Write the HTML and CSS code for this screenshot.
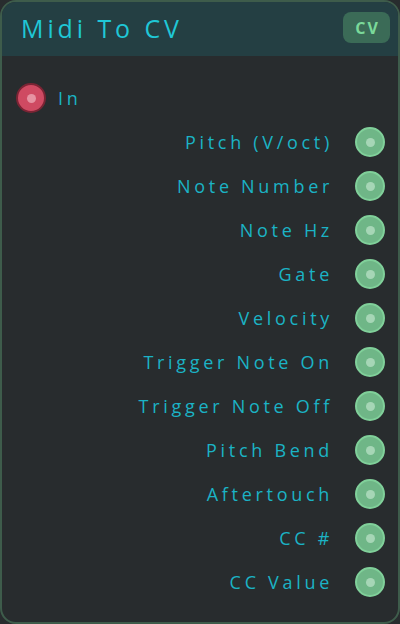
FILE: index.html
```html
<!DOCTYPE html>
<html>
<head>
<meta charset="utf-8">
<link rel="stylesheet" href="styles.css">
</head>
<body>
<div class="card">
  <div class="header">
    <span class="title">Midi To CV</span>
    <span class="badge">CV</span>
  </div>
  <div class="content">
    <div class="row in-row">
      <span class="port in"></span>
      <span class="label">In</span>
    </div>
    <div class="row out-row"><span class="label">Pitch (V/oct)</span><span class="port out"></span></div>
    <div class="row out-row"><span class="label">Note Number</span><span class="port out"></span></div>
    <div class="row out-row"><span class="label">Note Hz</span><span class="port out"></span></div>
    <div class="row out-row"><span class="label">Gate</span><span class="port out"></span></div>
    <div class="row out-row"><span class="label">Velocity</span><span class="port out"></span></div>
    <div class="row out-row"><span class="label">Trigger Note On</span><span class="port out"></span></div>
    <div class="row out-row"><span class="label">Trigger Note Off</span><span class="port out"></span></div>
    <div class="row out-row"><span class="label">Pitch Bend</span><span class="port out"></span></div>
    <div class="row out-row"><span class="label">Aftertouch</span><span class="port out"></span></div>
    <div class="row out-row"><span class="label">CC #</span><span class="port out"></span></div>
    <div class="row out-row"><span class="label">CC Value</span><span class="port out"></span></div>
  </div>
</div>
</body>
</html>
```
FILE: styles.css
```css
html, body { margin: 0; padding: 0; background: #282c2e; }
body { width: 400px; height: 624px; font-family: "Open Sans", sans-serif; }
.card {
  box-sizing: border-box;
  width: 400px; height: 624px;
  border: 2px solid #3e5c4b;
  border-radius: 16px;
  background: #282c2e;
  overflow: hidden;
  display: flex; flex-direction: column;
}
.header {
  height: 54px;
  background: #243f43;
  display: flex; align-items: center; justify-content: space-between;
  padding: 0 8px 0 19px;
  flex-shrink: 0;
}
.title {
  color: #1fc7d6;
  font-size: 25px;
  letter-spacing: 3.9px;
  font-weight: 400;
  margin-top: -3px;
}
.badge {
  background: #3b6b57;
  color: #7ad99a;
  font-weight: 700;
  font-size: 16px;
  letter-spacing: 2px;
  padding-left: 2px;
  box-sizing: border-box;
  width: 47px; height: 31px;
  border-radius: 8px;
  display: flex; align-items: center; justify-content: center;
  margin-top: -3px;
}
.content {
  display: flex; flex-direction: column;
  padding-top: 20px;
}
.row {
  height: 44px;
  display: flex; align-items: center;
}
.in-row { padding-left: 14px; gap: 12px; }
.out-row { justify-content: flex-end; padding-right: 13px; gap: 22px; }
.label {
  color: #1bb3c5;
  font-size: 18px;
  letter-spacing: 3.7px;
}
.port {
  box-sizing: border-box;
  width: 30px; height: 30px;
  border-radius: 50%;
  display: flex; align-items: center; justify-content: center;
  flex-shrink: 0;
}
.port::after {
  content: "";
  width: 9px; height: 9px; border-radius: 50%;
}
.in { background: #cf4a62; border: 2px solid #7a2434; }
.in::after { background: #e693a2; }
.out { background: #6fb687; border: 2px solid #80d09a; }
.out::after { background: #a6d6b6; }
```
